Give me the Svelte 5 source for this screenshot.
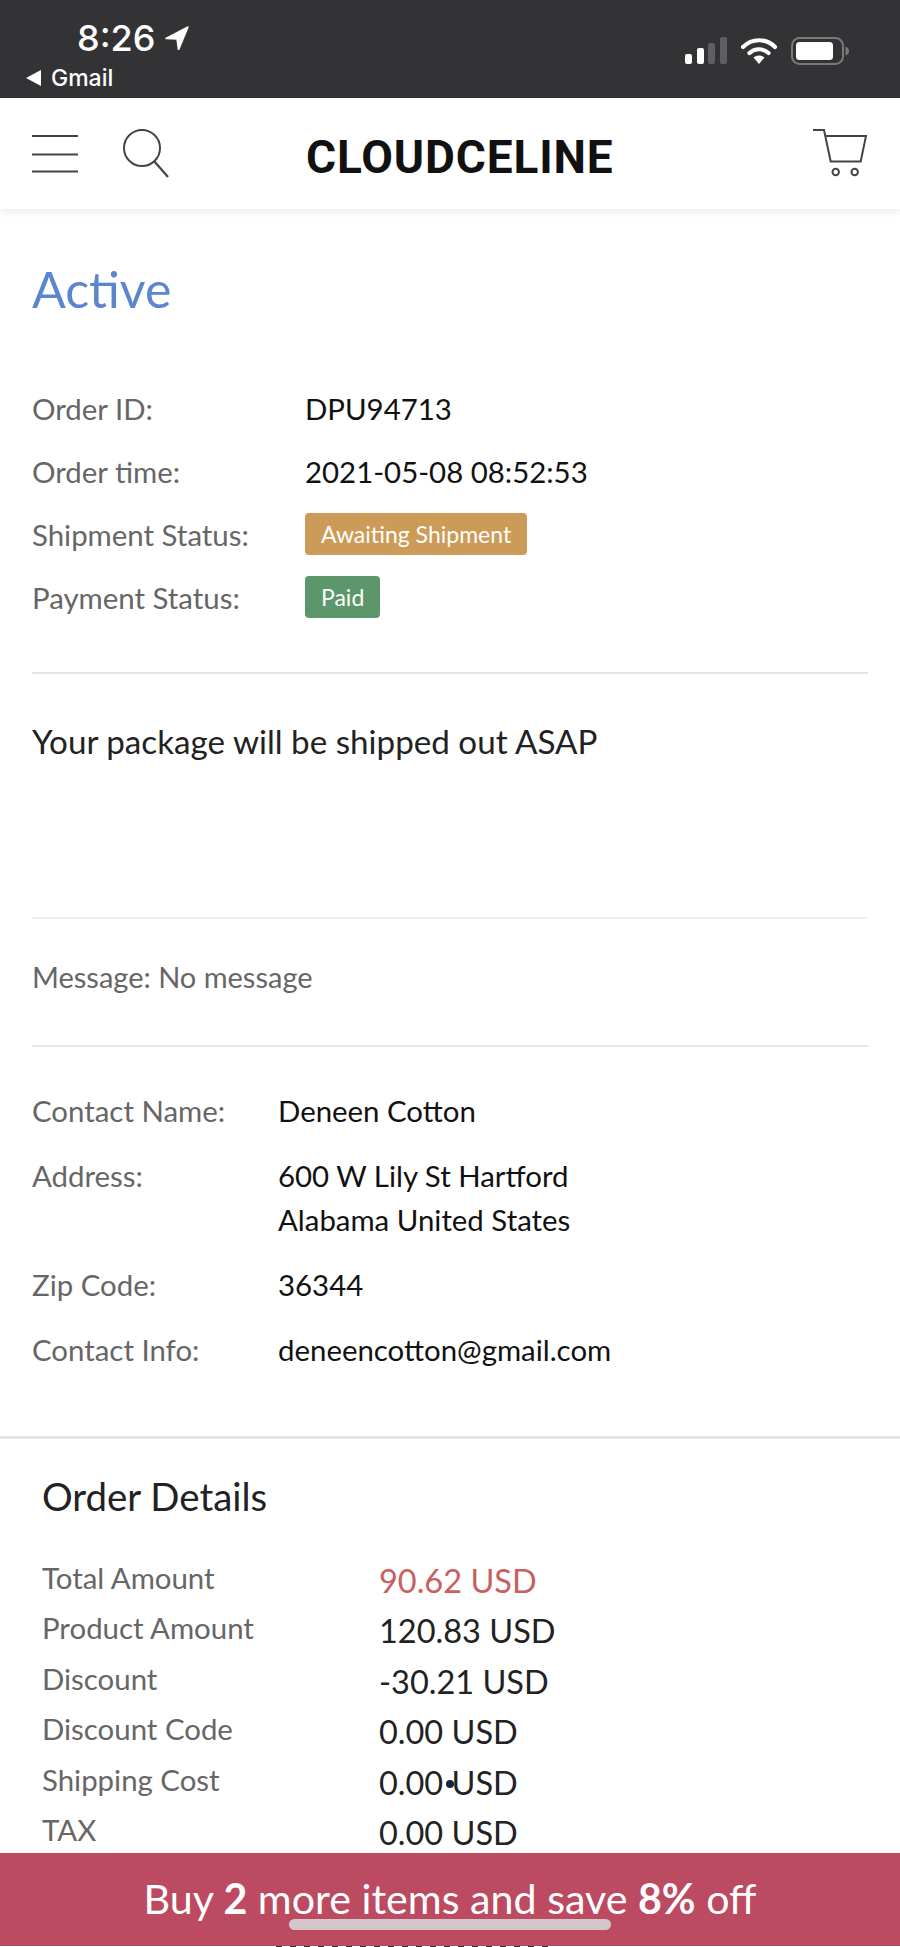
<script>
  const orderRows = [
    { label: 'Order ID:', value: 'DPU94713' },
    { label: 'Order time:', value: '2021-05-08 08:52:53' },
    { label: 'Shipment Status:', badge: 'Awaiting Shipment', tone: 'amber' },
    { label: 'Payment Status:', badge: 'Paid', tone: 'green' }
  ]

  const contactRows = [
    { label: 'Contact Name:', lines: ['Deneen Cotton'] },
    { label: 'Address:', lines: ['600 W Lily St Hartford', 'Alabama United States'] },
    { label: 'Zip Code:', lines: ['36344'] },
    { label: 'Contact Info:', lines: ['deneencotton@gmail.com'] }
  ]

  const amounts = [
    { label: 'Total Amount', value: '90.62 USD', total: true },
    { label: 'Product Amount', value: '120.83 USD' },
    { label: 'Discount', value: '-30.21 USD' },
    { label: 'Discount Code', value: '0.00 USD' },
    { label: 'Shipping Cost', value: '0.00 USD' },
    { label: 'TAX', value: '0.00 USD' }
  ]
</script>

<div class="page">
  <div class="status-bar">
    <div class="status-left">
      <div class="clock">
        <span>8:26</span>
        <svg width="24" height="24" viewBox="0 0 24 24" aria-hidden="true">
          <path d="M23 1 L1 12.5 L12 13 L13.5 24 Z" fill="#fff" stroke="#fff" stroke-width="1.5" stroke-linejoin="round" />
        </svg>
      </div>
      <div class="back-app">
        <svg width="15" height="16" viewBox="0 0 15 16" aria-hidden="true"><path d="M15 0 V16 L0 8 Z" fill="#fff" /></svg>
        <span>Gmail</span>
      </div>
    </div>
    <div class="status-right">
      <svg width="42" height="27" viewBox="0 0 42 27" aria-hidden="true">
        <rect x="0" y="17" width="7" height="10" rx="2" fill="#fff" />
        <rect x="12" y="11" width="7" height="16" rx="2" fill="#fff" />
        <rect x="23" y="6" width="7" height="21" rx="2" fill="#5d5f60" />
        <rect x="35" y="0" width="7" height="27" rx="2" fill="#5d5f60" />
      </svg>
      <svg width="36" height="27" viewBox="0 0 36 27" aria-hidden="true">
        <path d="M2 10 C11 1 25 1 34 10" fill="none" stroke="#fff" stroke-width="4.2" stroke-linecap="round" />
        <path d="M8.5 16 C14 11 22 11 27.5 16" fill="none" stroke="#fff" stroke-width="4.2" stroke-linecap="round" />
        <path d="M12.5 20.5 C15.5 17.8 20.5 17.8 23.5 20.5 L18 27 Z" fill="#fff" />
      </svg>
      <svg width="58" height="28" viewBox="0 0 58 28" aria-hidden="true">
        <rect x="1" y="1" width="51" height="26" rx="7.5" fill="none" stroke="#77797a" stroke-width="2" />
        <rect x="5" y="5" width="37" height="18" rx="3.5" fill="#fff" />
        <path d="M54.5 9.5 C57 10.5 58 12 58 14 C58 16 57 17.5 54.5 18.5 Z" fill="#77797a" />
      </svg>
    </div>
  </div>

  <header class="topbar">
    <div class="top-icons">
      <svg width="46" height="42" viewBox="0 0 46 42" aria-hidden="true">
        <path d="M0 3 H46 M0 21.500 H46 M0 38.500 H46" stroke="#444" stroke-width="2.2" />
      </svg>
      <svg width="48" height="50" viewBox="0 0 48 50" aria-hidden="true">
        <circle cx="19" cy="19" r="18" fill="none" stroke="#444" stroke-width="2" />
        <path d="M31 32 L45 48" stroke="#444" stroke-width="2.2" />
      </svg>
    </div>
    <div class="logo">CLOUDCELINE</div>
    <svg width="54" height="50" viewBox="0 0 54 50" aria-hidden="true">
      <path d="M0 1 H11 L17.700 32.500 H47.700 L53 7 H12" fill="none" stroke="#444" stroke-width="2" />
      <circle cx="22.700" cy="43" r="3.200" fill="none" stroke="#444" stroke-width="2" />
      <circle cx="41.700" cy="43" r="3.200" fill="none" stroke="#444" stroke-width="2" />
    </svg>
  </header>

  <main class="content">
    <h1 class="state">Active</h1>

    <section class="order-info">
      {#each orderRows as row}
        <div class="order-row">
          <span class="label">{row.label}</span>
          {#if row.badge}
            <span class="badge {row.tone}">{row.badge}</span>
          {:else}
            <span class="value">{row.value}</span>
          {/if}
        </div>
      {/each}
    </section>

    <p class="notice">Your package will be shipped out ASAP</p>
    <p class="message">Message: No message</p>

    <section class="contact">
      {#each contactRows as row}
        <div class="contact-row">
          <span class="label">{row.label}</span>
          <div class="value">
            {#each row.lines as line}
              <div>{line}</div>
            {/each}
          </div>
        </div>
      {/each}
    </section>

    <section class="details">
      <h2>Order Details</h2>
      {#each amounts as row}
        <div class="amount-row">
          <span class="label">{row.label}</span>
          <span class="value" class:total={row.total}>{row.value}</span>
        </div>
      {/each}
    </section>
  </main>

  <span class="stray-dot"></span>

  <div class="promo">
    <span>Buy <b>2</b> more items and save <b>8%</b> off</span>
    <span class="home-indicator"></span>
  </div>
  <span class="under-promo"></span>
</div>

<style>
  :global(body) { margin: 0; background: #fff; }

  .page {
    position: relative;
    width: 900px; height: 1947px;
    overflow: hidden;
    display: flex; flex-direction: column;
    font-family: Lato, "Open Sans", sans-serif;
    color: #111;
    background: #fff;
  }

  .status-bar {
    height: 98px; flex: none;
    background: #333335; color: #fff;
    display: flex; justify-content: space-between;
    font-family: Inter, Roboto, sans-serif;
  }

  .status-left { padding: 18px 0 0 26px; }

  .clock {
    display: flex; align-items: center; gap: 10px;
    padding-left: 51px;
    font-size: 36px; font-weight: 500; line-height: 40px;
  }

  .back-app {
    display: flex; align-items: center; gap: 10px;
    margin-top: 7px;
    font-size: 23px; font-weight: 500; line-height: 26px;
  }

  .status-right {
    display: flex; align-items: flex-start; gap: 14px;
    padding: 37px 51px 0 0;
  }

  .topbar {
    height: 111px; flex: none;
    position: relative;
    display: flex; align-items: center; justify-content: space-between;
    padding: 0 33px 0 32px;
    box-sizing: border-box;
    box-shadow: 0 3px 8px rgba(0,0,0,0.08);
  }

  .top-icons { display: flex; align-items: center; gap: 45px; }

  .logo {
    position: absolute; left: 306px; top: 35px;
    font-family: Roboto, sans-serif;
    font-size: 46px; font-weight: 700; line-height: 48px;
    color: #111;
    letter-spacing: 0.85px;
  }

  .content { padding: 0 32px; }

  .state {
    margin: 47px 0 0;
    font-size: 50px; font-weight: 400; line-height: 66px;
    color: #5b86cf;
  }

  .label { color: #666; }

  .order-info {
    margin-top: 55px;
    padding-bottom: 43px;
    border-bottom: 2px solid #e6e6e6;
    font-size: 29.400px;
  }

  .order-row {
    height: 63px;
    display: flex; align-items: center;
  }

  .order-row .label { width: 273px; flex: none; }

  .badge {
    height: 42px; padding: 0 16px;
    display: flex; align-items: center;
    border-radius: 4px;
    color: #fff;
    font-size: 23px;
    margin-top: -1px;
  }
  .badge.amber { background: #cd9b58; }
  .badge.green { background: #5c976c; }

  .notice {
    margin: 0;
    height: 245px;
    padding-top: 40px;
    box-sizing: border-box;
    border-bottom: 2px solid #efefef;
    font-size: 33.200px; line-height: 54px;
    color: #222;
  }

  .message {
    margin: 0;
    height: 128px;
    padding-top: 36px;
    box-sizing: border-box;
    border-bottom: 2px solid #e6e6e6;
    font-size: 29px; line-height: 44px;
    color: #666;
  }

  .contact {
    margin: 0 -32px;
    height: 392px;
    padding: 42px 32px 0;
    box-sizing: border-box;
    border-bottom: 3px solid #e6e6e6;
    font-size: 29.400px; line-height: 44px;
    display: flex; flex-direction: column; gap: 21px;
  }

  .contact-row { display: flex; }
  .contact-row .label { width: 246px; flex: none; }

  .details { padding: 0 10px; }

  .details h2 {
    margin: 32px 0 34px;
    font-size: 38.400px; font-weight: 400; line-height: 50px;
    color: #222;
  }

  .amount-row {
    height: 50.500px;
    display: flex; align-items: center;
    font-size: 32.500px;
  }

  .amount-row .label { width: 337px; flex: none; font-size: 29.400px; margin-top: -6px; }
  .amount-row .value { color: #222; }
  .amount-row .value.total { color: #c9605f; }

  .stray-dot {
    position: absolute; left: 446px; top: 1780px;
    width: 8px; height: 8px; border-radius: 50%;
    background: #12263f;
  }

  .promo {
    position: absolute; left: 0; right: 0; bottom: 1px;
    height: 93px;
    background: #bc4b62;
    color: #fff;
    font-size: 41.200px; line-height: 90px;
    text-align: center;
  }

  .promo b { font-weight: 700; }

  .home-indicator {
    position: absolute; left: 289px; top: 66px;
    width: 322px; height: 11px; border-radius: 6px;
    background: #d4c6cb;
  }

  /* tops of a line of text hidden behind the promo bar */
  .under-promo {
    position: absolute; left: 276px; bottom: 0;
    width: 280px; height: 1px;
    background: repeating-linear-gradient(90deg, #333 0 6px, #fff 6px 14px);
  }
</style>
